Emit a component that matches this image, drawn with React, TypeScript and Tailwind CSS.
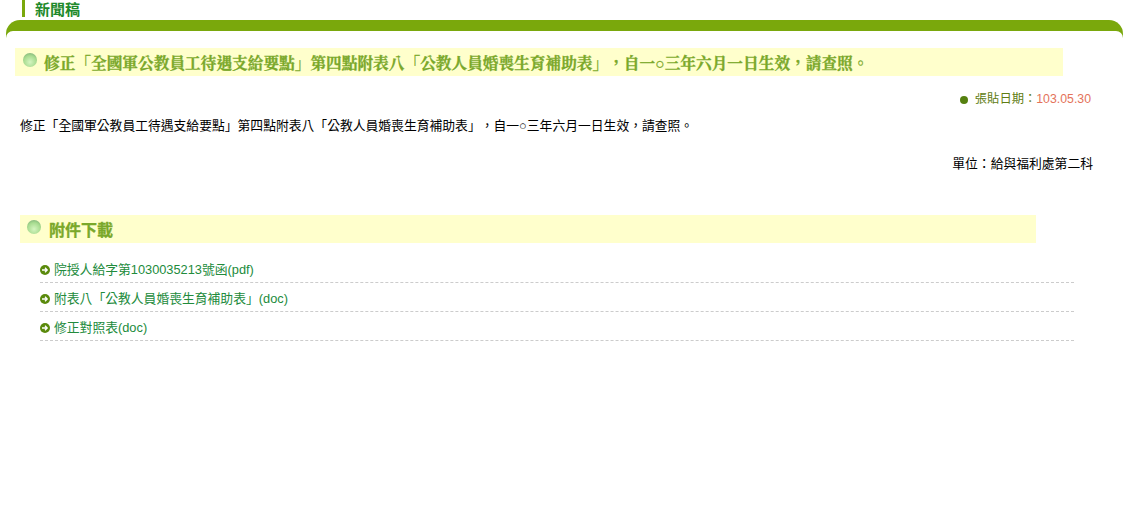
const links = [
  '院授人給字第1030035213號函(pdf)',
  '附表八「公教人員婚喪生育補助表」(doc)',
  '修正對照表(doc)',
]

function Ball({ className }: { className: string }) {
  return (
    <span
      className={`shrink-0 rounded-full bg-[radial-gradient(circle_at_50%_65%,#d5f5c0,#a8dc90_55%,#6f9f70)] ${className}`}
    />
  )
}

function ArrowDot() {
  return (
    <svg width="10" height="10" viewBox="0 0 10 10" className="shrink-0">
      <circle cx="5" cy="5" r="5" fill="#5a8a0c" />
      <path d="M2 5h5M5 2.8 7.2 5 5 7.2" stroke="#fff" strokeWidth="1.3" fill="none" />
    </svg>
  )
}

export default function App() {
  return (
    <div
      lang="zh-TW"
      className="min-h-[515px] w-[1124px] bg-white font-['Liberation_Sans','Noto_Sans_CJK_TC',sans-serif] text-[12.8px] text-black [text-spacing-trim:space-all]"
    >
      <div className="ml-[22px] h-[17px] border-l-[3px] border-[#7aa80c] pl-[10px] text-[15px] leading-[19px] font-bold text-[#1f8a2c]">
        新聞稿
      </div>
      <div className="mt-[3px] ml-[6px] h-[18px] w-[1117px] rounded-t-[14px] bg-[#7aa80c]">
        <div className="h-[11px]" />
        <div className="h-[7px] rounded-t-[10px] bg-white" />
      </div>

      <div className="mt-[10px] ml-[15px] flex h-[28px] w-[1048px] items-center bg-[#ffffcc] pl-[8px]">
        <Ball className="mb-[4px] h-[14px] w-[14px]" />
        <h1 className="mt-[3px] ml-[7px] font-['Liberation_Serif','Noto_Serif_CJK_TC','Noto_Sans_CJK_TC',serif] text-[15.68px] font-bold whitespace-nowrap text-[#7aa82a] [-webkit-text-stroke:0.3px_#7aa82a]">
          修正「全國軍公教員工待遇支給要點」第四點附表八「公教人員婚喪生育補助表」，自一○三年六月一日生效，請查照。
        </h1>
      </div>

      <div className="mt-[16px] mr-[33px] flex items-center justify-end text-[12.3px] leading-[14px]">
        <span className="mt-[2px] mr-[7px] h-[8px] w-[8px] rounded-full bg-[#55800f]" />
        <span className="text-[#5f7d12]">張貼日期：</span>
        <span className="text-[#e4735a]">103.05.30</span>
      </div>

      <p className="mt-[12px] ml-[20px] leading-[16px]">
        修正「全國軍公教員工待遇支給要點」第四點附表八「公教人員婚喪生育補助表」，自一○三年六月一日生效，請查照。
      </p>
      <p className="mt-[22px] mr-[31px] text-right leading-[16px]">單位：給與福利處第二科</p>

      <div className="mt-[43px] ml-[20px] flex h-[28px] w-[1016px] items-center bg-[#ffffcc] pl-[7px]">
        <Ball className="mb-[4px] h-[14px] w-[14px]" />
        <h2 className="mt-[3px] ml-[8px] font-['Liberation_Serif','Noto_Sans_CJK_TC',serif] text-[16px] font-bold text-[#7aa82a] [-webkit-text-stroke:0.3px_#7aa82a]">
          附件下載
        </h2>
      </div>

      <ul className="mt-[11px] ml-[40px] w-[1034px]">
        {links.map((label) => (
          <li
            key={label}
            className="flex h-[29px] items-center gap-[4px] border-b border-dashed border-[#cccccc] pt-[4px] text-[#228b3c]"
          >
            <ArrowDot />
            <span>{label}</span>
          </li>
        ))}
      </ul>
    </div>
  )
}
